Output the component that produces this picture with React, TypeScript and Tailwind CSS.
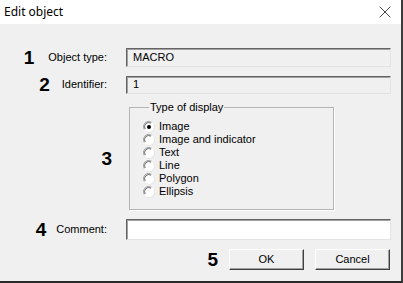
import { X } from "lucide-react";

const sunken =
  "border-t border-l border-b border-r border-t-[#646464] border-l-[#646464] border-b-[#e3e3e3] border-r-[#e3e3e3] shadow-[inset_1px_1px_0_#a0a0a0]";

function Radio({ checked }: { checked?: boolean }) {
  return (
    <svg width="12" height="12" viewBox="0 0 12 12" className="shrink-0">
      <circle cx="6" cy="6" r="5.5" fill="#ffffff" />
      <path d="M1.2 8.5 A5.3 5.3 0 0 1 8.5 1.2" fill="none" stroke="#a0a0a0" strokeWidth="1" />
      <path d="M2.2 8 A4.2 4.2 0 0 1 8 2.2" fill="none" stroke="#696969" strokeWidth="1" />
      <path d="M10.8 3.5 A5.3 5.3 0 0 1 3.5 10.8" fill="none" stroke="#e3e3e3" strokeWidth="1" />
      {checked && <circle cx="6" cy="6" r="2" fill="#000" />}
    </svg>
  );
}

function Num({ n }: { n: string }) {
  return (
    <span className="font-['Liberation_Sans',Arial,sans-serif] text-[19px] font-bold leading-none text-black">
      {n}
    </span>
  );
}

function Row({
  num,
  label,
  gap,
  children,
}: {
  num: string;
  label: string;
  gap: string;
  children: React.ReactNode;
}) {
  return (
    <div className="flex items-center">
      <div className={`flex w-[126px] items-center justify-end pr-[19px] ${gap}`}>
        <Num n={num} />
        <span>{label}</span>
      </div>
      {children}
    </div>
  );
}

const options = ["Image", "Image and indicator", "Text", "Line", "Polygon", "Ellipsis"];

export default function App() {
  return (
    <div className="flex h-[283px] w-[403px] flex-col overflow-hidden border-r-2 border-b-2 border-r-[#3c3c3c] border-b-[#2a2a2a] bg-[#f0f0f0] font-['Liberation_Sans',Tahoma,sans-serif] text-[11px] text-black">
      <div className="flex h-[24px] shrink-0 items-center justify-between bg-white pl-[4px] pr-[6px]">
        <span className="font-['Noto_Sans',sans-serif] text-[12px]">Edit object</span>
        <X size={20} strokeWidth={0.9} />
      </div>

      <div className="flex flex-col pt-[24px] pr-[10px]">
        <Row num="1" label="Object type:" gap="gap-[14px]">
          <div className={`flex h-[19px] w-[265px] items-center pl-[6px] ${sunken} bg-[#f0f0f0]`}>MACRO</div>
        </Row>
        <div className="mt-[8px]">
          <Row num="2" label="Identifier:" gap="gap-[12px]">
            <div className={`flex h-[18px] w-[265px] items-center pl-[6px] ${sunken} bg-[#f0f0f0]`}>1</div>
          </Row>
        </div>

        <div className="mt-[7px] flex items-center">
          <div className="flex w-[129px] justify-end pr-[17px] pt-[6px]">
            <Num n="3" />
          </div>
          <fieldset className="h-[109px] w-[205px] border border-[#b4b4b4] pl-[13px] shadow-[1px_1px_0_#ffffff]">
            <legend className="ml-[6px] px-[1px] leading-[13px]">Type of display</legend>
            <div className="mt-[6px] flex flex-col">
              {options.map((o, i) => (
                <div key={o} className="flex h-[13px] items-center gap-[4px]">
                  <Radio checked={i === 0} />
                  <span className="leading-none">{o}</span>
                </div>
              ))}
            </div>
          </fieldset>
        </div>

        <div className="mt-[9px]">
          <Row num="4" label="Comment:" gap="gap-[10px]">
            <div className={`h-[21px] w-[265px] bg-white ${sunken}`} />
          </Row>
        </div>

        <div className="mt-[9px] flex items-center justify-end gap-[11px] pr-[1px]">
          <Num n="5" />
          <div className="flex gap-[11px]">
            <button className="flex h-[21px] w-[75px] items-center justify-center border border-t-white border-l-white border-b-[#404040] border-r-[#404040] bg-[#f0f0f0] shadow-[inset_-1px_-1px_0_#a0a0a0]">
              OK
            </button>
            <button className="flex h-[21px] w-[75px] items-center justify-center border border-t-white border-l-white border-b-[#404040] border-r-[#404040] bg-[#f0f0f0] shadow-[inset_-1px_-1px_0_#a0a0a0]">
              Cancel
            </button>
          </div>
        </div>
      </div>
    </div>
  );
}
